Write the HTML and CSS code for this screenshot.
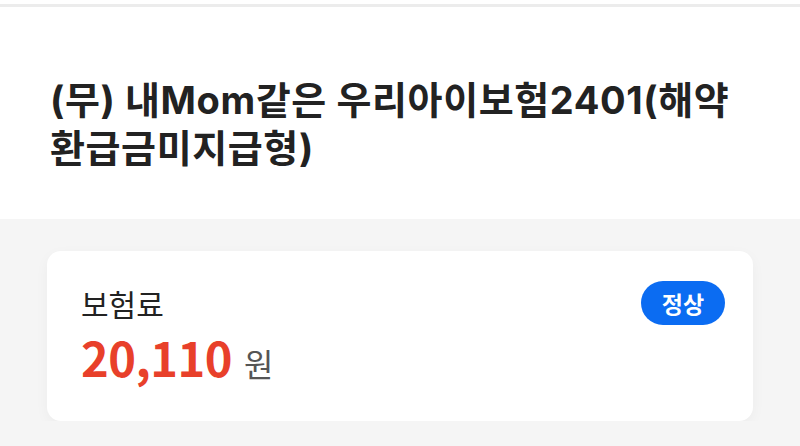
FILE: index.html
```html
<!DOCTYPE html>
<html lang="ko">
<head>
<meta charset="utf-8">
<link rel="stylesheet" href="styles.css">
</head>
<body>
<div class="topline"></div>
<header class="head">
  <h1 class="title">(무) 내Mom같은 우리아이보험2401(해약<br>환급금미지급형)</h1>
</header>
<main class="section">
  <div class="card">
    <div class="info">
      <div class="label">보험료</div>
      <div class="amount"><span class="num">20,110</span><span class="unit">원</span></div>
    </div>
    <span class="badge">정상</span>
  </div>
</main>
</body>
</html>
```
FILE: styles.css
```css
html, body {
  margin: 0;
  padding: 0;
  background: #f5f5f5;
  font-family: "Inter", "Noto Sans CJK KR", "Noto Sans", sans-serif;
  color: #222;
}
.topline {
  height: 4px;
  background: #ffffff;
  border-bottom: 3px solid #ececec;
}
.head {
  background: #ffffff;
  padding: 69px 50px 47px;
}
.title {
  margin: 0;
  font-size: 38px;
  line-height: 48px;
  font-weight: 700;
  letter-spacing: 0.6px;
  color: #222222;
}
.section {
  padding: 32px 47px 0;
}
.card {
  background: #ffffff;
  border-radius: 14px;
  box-shadow: 0 4px 14px rgba(0, 0, 0, 0.04);
  height: 170px;
  box-sizing: border-box;
  padding: 30px 28px 0 34px;
  display: flex;
  justify-content: space-between;
  align-items: flex-start;
}
.info {
  padding-top: 4px;
}
.label {
  font-size: 30px;
  line-height: 40px;
  color: #222;
}
.amount {
  display: flex;
  align-items: baseline;
  margin-top: 4px;
}
.num {
  font-family: "Noto Sans CJK KR", sans-serif;
  font-size: 47px;
  font-weight: 700;
  color: #e8402a;
  line-height: 56px;
  letter-spacing: -0.5px;
}
.unit {
  font-size: 32px;
  color: #555;
  margin-left: 12px;
}
.badge {
  background: #0b6cf2;
  color: #fff;
  font-size: 23px;
  font-weight: 700;
  width: 84px;
  height: 44px;
  border-radius: 22px;
  display: flex;
  align-items: center;
  justify-content: center;
}
```
